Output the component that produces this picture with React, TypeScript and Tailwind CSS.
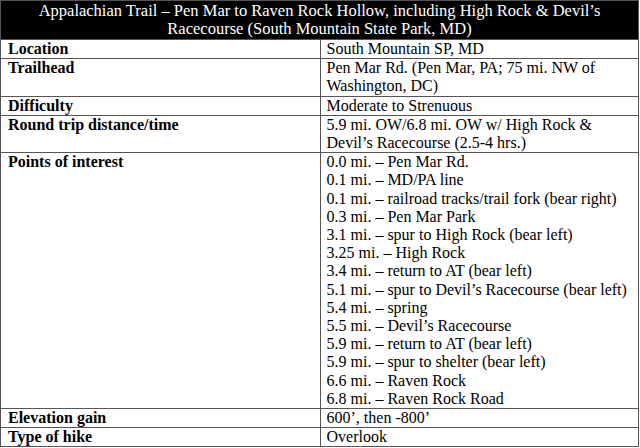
import React from "react";

const poi = [
  "0.0 mi. – Pen Mar Rd.",
  "0.1 mi. – MD/PA line",
  "0.1 mi. – railroad tracks/trail fork (bear right)",
  "0.3 mi. – Pen Mar Park",
  "3.1 mi. – spur to High Rock (bear left)",
  "3.25 mi. – High Rock",
  "3.4 mi. – return to AT (bear left)",
  "5.1 mi. – spur to Devil’s Racecourse (bear left)",
  "5.4 mi. – spring",
  "5.5 mi. – Devil’s Racecourse",
  "5.9 mi. – return to AT (bear left)",
  "5.9 mi. – spur to shelter (bear left)",
  "6.6 mi. – Raven Rock",
  "6.8 mi. – Raven Rock Road",
];

const rows: [string, React.ReactNode][] = [
  ["Location", "South Mountain SP, MD"],
  ["Trailhead", <>Pen Mar Rd. (Pen Mar, PA; 75 mi. NW of<br />Washington, DC)</>],
  ["Difficulty", "Moderate to Strenuous"],
  ["Round trip distance/time", <>5.9 mi. OW/6.8 mi. OW w/ High Rock &amp;<br />Devil’s Racecourse (2.5-4 hrs.)</>],
  ["Points of interest", <>{poi.map((p, i) => (<div key={i}>{p}</div>))}</>],
  ["Elevation gain", "600’, then -800’"],
  ["Type of hike", "Overlook"],
];

export default function App() {
  return (
    <div className="w-[640px] h-[448px] bg-white overflow-hidden font-['Liberation_Serif','Times_New_Roman',serif]">
      <table className="w-[639px] border-collapse text-[16px] leading-[18.2px] text-black font-['Liberation_Serif','Times_New_Roman',serif]">
        <colgroup>
          <col className="w-[320px]" />
          <col className="w-[319px]" />
        </colgroup>
        <thead>
          <tr>
            <th colSpan={2} className="bg-black text-white font-normal text-center text-[16.5px] border border-[#555] px-1 pt-[0.5px] pb-[1px]">
              Appalachian Trail – Pen Mar to Raven Rock Hollow, including High Rock &amp; Devil’s<br />
              Racecourse (South Mountain State Park, MD)
            </th>
          </tr>
        </thead>
        <tbody>
          {rows.map(([label, value], i) => (
            <tr key={i}>
              <td className="align-top font-bold border border-[#555] pl-[7px] pr-1 py-0">{label}</td>
              <td className="align-top border border-[#555] pl-[6px] pr-1 py-0">{value}</td>
            </tr>
          ))}
        </tbody>
      </table>
    </div>
  );
}
